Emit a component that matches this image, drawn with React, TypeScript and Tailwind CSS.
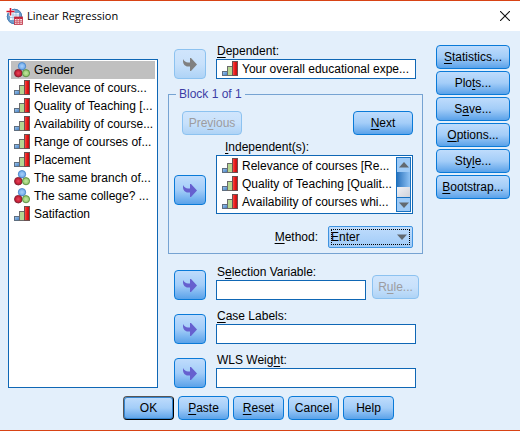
import React from "react";

function ScaleIcon() {
  return (
    <svg width="16" height="16" viewBox="0 0 16 16" className="shrink-0" shapeRendering="crispEdges" aria-hidden="true">
      <defs>
        <linearGradient id="barBlue" x1="0" x2="1" y1="0" y2="1">
          <stop offset="0" stopColor="#a6ccf2" />
          <stop offset="1" stopColor="#3b78bd" />
        </linearGradient>
        <linearGradient id="barRed" x1="0" x2="1">
          <stop offset="0" stopColor="#ff5a50" />
          <stop offset="0.5" stopColor="#e81818" />
          <stop offset="1" stopColor="#b80c14" />
        </linearGradient>
      </defs>
      <rect x="0.5" y="10.5" width="5" height="4" fill="url(#barBlue)" stroke="#5f6f80" />
      <rect x="5.5" y="5.5" width="5" height="9" fill="#b5d692" stroke="#6b6b6b" />
      <rect x="10.5" y="0.5" width="5" height="14" fill="url(#barRed)" stroke="#6b5050" />
    </svg>
  );
}

function NominalIcon() {
  return (
    <svg width="16" height="16" viewBox="0 0 16 16" className="shrink-0" aria-hidden="true">
      <defs>
        <radialGradient id="ballBlue">
          <stop offset="0" stopColor="#a9d0fa" />
          <stop offset="1" stopColor="#6aa8ea" />
        </radialGradient>
        <radialGradient id="ballRed">
          <stop offset="0" stopColor="#e8455a" />
          <stop offset="1" stopColor="#b80f28" />
        </radialGradient>
        <radialGradient id="ballGreen">
          <stop offset="0" stopColor="#c4e6a4" />
          <stop offset="1" stopColor="#8cc763" />
        </radialGradient>
      </defs>
      <circle cx="8" cy="4.2" r="3.7" fill="url(#ballBlue)" stroke="#4b86c8" strokeWidth="0.9" />
      <circle cx="4.3" cy="11.2" r="3.8" fill="url(#ballRed)" stroke="#7c2434" strokeWidth="0.9" />
      <circle cx="12" cy="11.2" r="3.6" fill="url(#ballGreen)" stroke="#5b8a45" strokeWidth="0.9" />
    </svg>
  );
}

function AppIcon() {
  return (
    <svg width="17" height="17" viewBox="0 0 17 17" className="shrink-0" aria-hidden="true">
      <circle cx="8.5" cy="8.5" r="7.7" fill="#6f9fcc" />
      <circle cx="8.5" cy="8.5" r="7.2" fill="none" stroke="#4a7db3" />
      <path d="M4 5h9v7H4z" fill="#eef5fb" />
      <path d="M4 7h9M4 9.500h9M7 5v7M10 5v7" stroke="#9dbfe0" strokeWidth="0.8" />
      <path d="M4.500 0v8M0.500 3.500h8" stroke="#fff" strokeWidth="2.600" />
      <path d="M4.500 0v7.500M0.500 3.500h8" stroke="#d8142c" strokeWidth="1.600" />
      <rect x="8.5" y="9" width="8" height="7.500" fill="#f7dde0" stroke="#b8283c" strokeWidth="0.8" />
      <path d="M8.500 10h8" stroke="#c22338" strokeWidth="2" />
      <path d="M8.500 12.800h8M8.500 14.700h8M11 10v6.500M13.700 10v6.500" stroke="#cf5565" strokeWidth="0.9" />
    </svg>
  );
}

const buttonBase =
  "flex h-6 items-center justify-center whitespace-nowrap rounded border";
const buttonOn =
  "border-[#0a7ad8] bg-linear-to-b from-[#bfdcfc] via-[#a3cdf8] to-[#5aa2e9] text-black";
const buttonOff =
  "border-[#8cc2f0] bg-linear-to-b from-[#d0e5fc] via-[#c8e1fb] to-[#aed3f6] text-[#9c9ca0]";

/* The letter that follows "&" in a caption is its access key and is underlined. */
function Caption({ text }: { text: string }) {
  const at = text.indexOf("&");
  if (at < 0) return <>{text}</>;
  return (
    <span>
      {text.slice(0, at)}
      <span className="underline underline-offset-2">{text[at + 1]}</span>
      {text.slice(at + 2)}
    </span>
  );
}

function Button({ text, className = "", disabled = false }: { text: string; className?: string; disabled?: boolean }) {
  return (
    <button type="button" disabled={disabled} className={`${buttonBase} ${disabled ? buttonOff : buttonOn} ${className}`}>
      <Caption text={text} />
    </button>
  );
}

function MoveButton({ label, disabled = false }: { label: string; disabled?: boolean }) {
  return (
    <button
      type="button"
      aria-label={label}
      disabled={disabled}
      className={`flex h-[30px] w-8 shrink-0 items-center justify-center rounded border ${disabled ? buttonOff : buttonOn}`}
    >
      <svg width="14" height="13" viewBox="0 0 14 13" aria-hidden="true">
        <path
          d="M0 1C1 3 3 4.500 5 4.500H7V0h1l6 6.500L8 13H7V8.500H5C2 8.500 0 6 0 3z"
          fill={disabled ? "#808080" : "#6660cf"}
        />
      </svg>
    </button>
  );
}

const fieldBox = "h-5 w-full border border-[#0f67b5] bg-white px-1 outline-none";

type FieldProps = {
  id: string;
  label: string;
  move: string;
  moveDisabled?: boolean;
  children?: React.ReactNode;
};

function Field({ id, label, move, moveDisabled, children }: FieldProps) {
  return (
    <div className="flex items-end gap-2.5 pr-[7px] pl-1.5">
      <MoveButton label={move} disabled={moveDisabled} />
      <div className="min-w-0 flex-1">
        <label htmlFor={id} className="block h-4 pl-px leading-4">
          <Caption text={label} />
        </label>
        {children ?? <input id={id} className={`${fieldBox} block`} />}
      </div>
    </div>
  );
}

const variables = [
  { name: "Gender", nominal: true },
  { name: "Relevance of cours..." },
  { name: "Quality of Teaching [..." },
  { name: "Availability of course..." },
  { name: "Range of courses of..." },
  { name: "Placement" },
  { name: "The same branch of...", nominal: true },
  { name: "The same college? ...", nominal: true },
  { name: "Satifaction" },
];

const independents = [
  "Relevance of courses [Re...",
  "Quality of Teaching [Qualit...",
  "Availability of courses whi...",
];

function Triangle({ up = false }: { up?: boolean }) {
  return (
    <svg width="10" height="6" viewBox="0 0 10 6" aria-hidden="true">
      <path d={up ? "M0 5.500L5 0l5 5.500z" : "M0 0.500h10L5 6z"} fill="#626970" />
    </svg>
  );
}

export default function App() {
  return (
    <div className="min-h-screen border-y border-[#d84315] bg-[#e3effb] font-['Liberation_Sans',Arial,sans-serif] text-[12px] leading-[18px] text-black">
      <header className="flex h-[30px] items-center bg-white pr-2.5 pl-1.5">
        <AppIcon />
        <h1 className="ml-1 font-['Open_Sans','Noto_Sans',sans-serif] text-[11px]">Linear Regression</h1>
        <button type="button" aria-label="Close" className="ml-auto">
          <svg width="10" height="10" viewBox="0 0 10 10" aria-hidden="true">
            <path d="M0 0l10 10M10 0L0 10" stroke="#111" strokeWidth="1.1" />
          </svg>
        </button>
      </header>

      <main className="flex pt-3 pr-2.5 pl-2">
        <ul role="listbox" aria-label="Variables" className="mt-4 w-[150px] shrink-0 border border-[#0f67b5] bg-white px-0.5 py-px">
          {variables.map((v, i) => (
            <li
              key={v.name}
              role="option"
              aria-selected={i === 0}
              className={`flex h-[18px] items-center gap-1 overflow-hidden pl-[3px] whitespace-nowrap ${i === 0 ? "bg-[#c0c0c0]" : ""}`}
            >
              {v.nominal ? <NominalIcon /> : <ScaleIcon />}
              {v.name}
            </li>
          ))}
        </ul>

        <div className="mx-2.5 flex min-w-0 flex-1 flex-col">
          <Field id="dependent" label="&Dependent:" move="Move to Dependent" moveDisabled>
            <div className="flex h-5 items-center gap-1 border border-[#0f67b5] bg-white pl-[5px]">
              <ScaleIcon />
              <input id="dependent" readOnly value="Your overall educational expe..." className="min-w-0 flex-1 outline-none" />
            </div>
          </Field>

          <fieldset className="mt-1.5 min-w-0 border border-[#76a3d2] pr-[9px] pb-[5px] pl-[5px]">
            <legend className="ml-0.5 px-[3px] text-[#3d3da5]">Block 1 of 1</legend>
            <div className="flex justify-between pt-2 pl-2">
              <Button text="Pre&vious" disabled className="w-[60px]" />
              <Button text="&Next" className="w-[60px]" />
            </div>
            <div className="mt-[3px] flex items-start gap-2.5">
              <div className="pt-[37px]">
                <MoveButton label="Move to Independent(s)" />
              </div>
              <div className="min-w-0 flex-1">
                <div id="independents-label" className="h-[17px] pl-[9px]">
                  <Caption text="&Independent(s):" />
                </div>
                <div className="flex border border-[#0f67b5] bg-white p-px">
                  <ul role="listbox" aria-labelledby="independents-label" className="min-w-0 flex-1 pb-px">
                    {independents.map((name) => (
                      <li key={name} role="option" aria-selected={false} className="flex h-[18px] items-center gap-1 overflow-hidden pl-1 whitespace-nowrap">
                        <ScaleIcon />
                        {name}
                      </li>
                    ))}
                  </ul>
                  <div className="flex w-[15px] shrink-0 flex-col border border-[#1670c0] bg-[#dfe3ea]">
                    <div className="flex h-3.5 items-center justify-center bg-[#9fcbf7]">
                      <Triangle up />
                    </div>
                    <div className="h-[15px] bg-linear-to-r from-[#2773bd] to-[#8fc3f5]" />
                    <div className="flex-1 border-b border-[#1670c0] bg-linear-to-br from-[#f1f1f5] to-[#cfd2da]" />
                    <div className="flex h-[13px] items-center justify-center bg-[#9fcbf7]">
                      <Triangle />
                    </div>
                  </div>
                </div>
              </div>
            </div>
            <div className="mt-3 flex items-center justify-end gap-2.5">
              <label htmlFor="method">
                <Caption text="&Method:" />
              </label>
              <div className="relative">
                <select
                  id="method"
                  className="block h-[22px] w-[85px] appearance-none rounded-xs border border-[#3f93e0] bg-linear-to-b from-[#bfdcfc] to-[#a0cbf7] pl-0.5 outline-1 -outline-offset-4 outline-dotted outline-black"
                >
                  <option>Enter</option>
                </select>
                <span className="pointer-events-none absolute inset-y-0 right-1.5 flex items-center">
                  <Triangle />
                </span>
              </div>
            </div>
          </fieldset>

          <div className="mt-2.5 flex flex-col gap-2">
            <Field id="selection" label="S&election Variable:" move="Move to Selection Variable">
              <div className="flex h-5 gap-1.5">
                <input id="selection" className={`${fieldBox} min-w-0 flex-1`} />
                <Button text="R&ule..." disabled className="-mt-[5px] -mr-[3px] w-[47px]" />
              </div>
            </Field>
            <Field id="cases" label="&Case Labels:" move="Move to Case Labels" />
            <Field id="weight" label="WLS Weig&ht:" move="Move to WLS Weight" />
          </div>
        </div>

        <div className="mt-0.5 ml-[3px] flex w-[74px] shrink-0 flex-col gap-0.5">
          <Button text="&Statistics..." />
          <Button text="Plo&ts..." />
          <Button text="S&ave..." />
          <Button text="&Options..." />
          <Button text="Sty&le..." />
          <Button text="&Bootstrap..." />
        </div>
      </main>

      <footer className="flex justify-center gap-1 pt-2 pr-[3px] pb-2">
        <button
          type="submit"
          className={`${buttonBase} w-[51px] border-t-[#555] border-r-black border-b-black border-l-[#555] bg-linear-to-b from-[#bfdcfc] via-[#a3cdf8] to-[#5aa2e9] shadow-[inset_0_0_0_1px_#3585d0]`}
        >
          OK
        </button>
        <Button text="&Paste" className="w-[51px]" />
        <Button text="&Reset" className="w-[51px]" />
        <Button text="Cancel" className="w-[51px]" />
        <Button text="Help" className="w-[51px]" />
      </footer>
    </div>
  );
}
